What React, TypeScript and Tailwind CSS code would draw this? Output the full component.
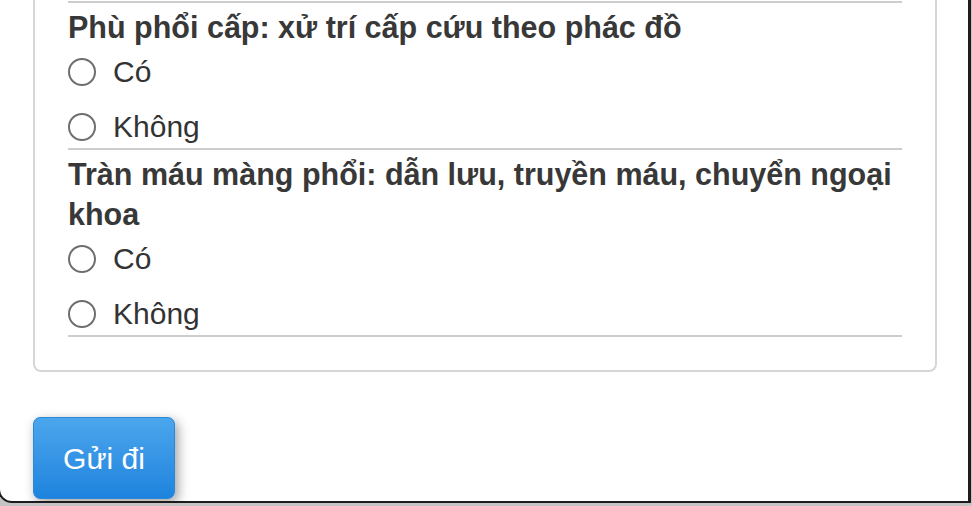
import React from "react";

function Radio({ label }: { label: string }) {
  return (
    <label className="flex h-[43px] items-center">
      <span className="box-border h-[28px] w-[28px] rounded-full border-2 border-[#6e6e6e] bg-white" />
      <span className="ml-[17px] text-[30px] leading-[40px] text-[#333333]">{label}</span>
    </label>
  );
}

function Section({ title }: { title: string }) {
  return (
    <div>
      <div className="h-[2px] bg-[#cdcdcd]" />
      <div className="pt-[4px] text-[30.5px] font-bold leading-[40px] text-[#383838]">{title}</div>
      <div className="mt-[3px] flex flex-col gap-[12px]">
        <Radio label="Có" />
        <Radio label="Không" />
      </div>
    </div>
  );
}

export default function App() {
  return (
    <div
      className="h-[506px] w-[972px] overflow-hidden bg-[#c4c4c4]"
      style={{ fontFamily: '"Liberation Sans", Arial, Helvetica, sans-serif' }}
    >
      <div className="box-border ml-[-2px] h-[503px] w-[973px] overflow-hidden rounded-bl-[14px] border-b-2 border-l-2 border-r-[3px] border-[#1c1c1c] bg-white">
        <div className="ml-[33px] w-[904px] box-border rounded-b-[8px] border-2 border-t-0 border-[#d6d6d6] px-[33px] pb-[33px] pt-[1px]">
          <Section title="Phù phổi cấp: xử trí cấp cứu theo phác đồ" />
          <Section title="Tràn máu màng phổi: dẫn lưu, truyền máu, chuyển ngoại khoa" />
          <div className="h-[2px] bg-[#cdcdcd]" />
        </div>
        <button className="ml-[33px] mt-[45px] box-border flex h-[82px] w-[142px] items-center justify-center rounded-[7px] border border-[#2c88d8] bg-gradient-to-b from-[#4ba6ec] to-[#1d83de] text-[30px] text-white shadow-[3px_4px_12px_rgba(0,0,0,0.38)]">
          Gửi đi
        </button>
      </div>
    </div>
  );
}
